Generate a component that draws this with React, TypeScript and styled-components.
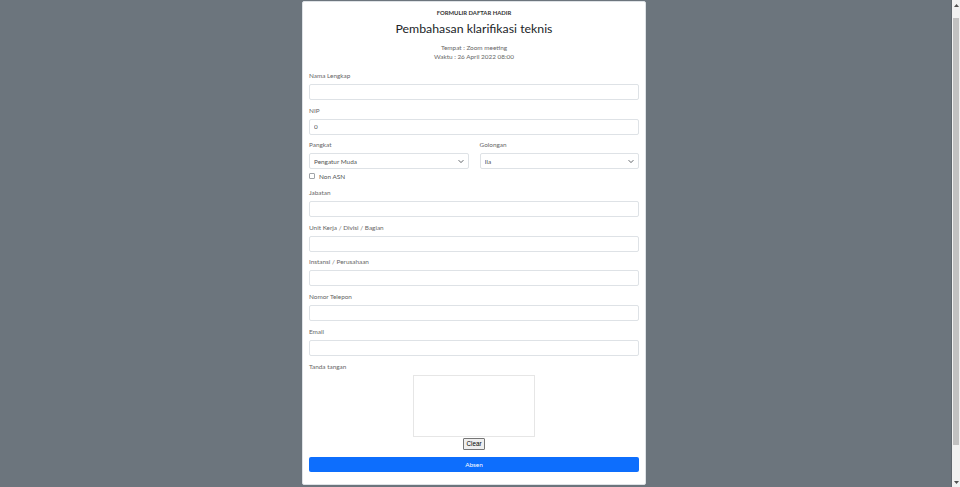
import React from "react";
import styled, { createGlobalStyle } from "styled-components";

const GlobalStyle = createGlobalStyle`
  html, body { margin: 0; padding: 0; overflow: hidden; }
  body {
    background: #6c757d;
    font-family: "Lato", "Noto Sans", sans-serif;
  }
`;

const Shell = styled.div`
  display: flex;
  height: 100vh;
  overflow: hidden;
`;

const Main = styled.main`
  flex: 1;
  display: flex;
  justify-content: center;
  align-items: flex-start;
  padding-top: 1px;
  border-right: 1px solid #5f676e;
`;

const ScrollBar = styled.div`
  width: 8px;
  display: flex;
  flex-direction: column;
  background: #f1f1f1;
`;

const ScrollButton = styled.div`
  height: 10px;
  display: flex;
  align-items: center;
  justify-content: center;
`;

const ScrollTrack = styled.div`
  flex: 1;
  padding: 8px 1px 0;
`;

const ScrollThumb = styled.div`
  height: 427px;
  background: #c1c1c1;
`;

const Card = styled.div`
  width: 344px;
  margin-right: 3px;
  box-sizing: border-box;
  background: #fff;
  border: 1px solid #dee2e6;
  border-radius: 2px;
  padding: 6px 6px 12px;
`;

const Kicker = styled.div`
  text-align: center;
  font-size: 5.9px;
  font-weight: 700;
  line-height: 9px;
  color: #333;
`;

const Title = styled.h1`
  margin: 4px 0 0;
  text-align: center;
  font-size: 12.3px;
  font-weight: 400;
  line-height: 16px;
  color: #212529;
`;

const Meta = styled.div`
  margin-top: 6px;
  text-align: center;
  font-size: 6.4px;
  line-height: 9px;
  color: #666;
`;

const Form = styled.form`
  margin-top: 10px;
  display: flex;
  flex-direction: column;
`;

const Group = styled.div<{ $gap?: number }>`
  display: flex;
  flex-direction: column;
  margin-bottom: ${(p) => p.$gap ?? 5.7}px;
  min-width: 0;
`;

const Label = styled.label`
  font-size: 6.4px;
  line-height: 9px;
  color: #666;
  margin-bottom: 4px;
`;

const Input = styled.input`
  display: block;
  box-sizing: border-box;
  height: 16px;
  width: 100%;
  border: 1px solid #dee2e6;
  border-radius: 2px;
  padding: 0 4px;
  font-family: inherit;
  font-size: 6.4px;
  color: #555;
  background: #fff;
  outline: none;
`;

const Row = styled.div`
  display: grid;
  grid-template-columns: 1fr 1fr;
  column-gap: 11px;
`;

const SelectWrap = styled.div`
  position: relative;
`;

const Select = styled.select`
  display: block;
  box-sizing: border-box;
  appearance: none;
  height: 16px;
  width: 100%;
  border: 1px solid #dee2e6;
  border-radius: 2px;
  padding: 0 4px;
  font-family: inherit;
  font-size: 6.4px;
  color: #555;
  background: #fff;
  outline: none;
`;

const Chevron = styled.svg`
  position: absolute;
  right: 5px;
  top: 5.5px;
  width: 6px;
  height: 5px;
  pointer-events: none;
`;

const CheckRow = styled.div`
  display: flex;
  align-items: center;
  gap: 4px;
  margin-top: 2px;
  margin-bottom: 6.7px;
  height: 10px;
`;

const Check = styled.input`
  appearance: none;
  margin: 0;
  width: 6px;
  height: 6px;
  border: 1px solid #a0a4a8;
  border-radius: 1px;
  background: #fff;
`;

const CheckLabel = styled.label`
  font-size: 6.4px;
  color: #555;
`;

const SignArea = styled.div`
  display: flex;
  flex-direction: column;
  align-items: center;
`;

const Canvas = styled.canvas`
  display: block;
  box-sizing: border-box;
  width: 122px;
  height: 62px;
  border: 1px solid #e6e6e6;
  background: #fff;
`;

const ClearButton = styled.button`
  box-sizing: border-box;
  margin-top: 1px;
  height: 12px;
  width: 22px;
  padding: 0;
  font-family: "Liberation Sans", Arial, sans-serif;
  font-size: 6.3px;
  color: #000;
  background: #efefef;
  border: 1px solid #767676;
  border-radius: 1px;
`;

const Submit = styled.button`
  margin-top: 7px;
  height: 15px;
  width: 100%;
  border: none;
  border-radius: 2px;
  background: #0d6efd;
  color: #fff;
  font-family: inherit;
  font-size: 6.4px;
  padding: 0;
`;

const fields = ["Jabatan", "Unit Kerja / Divisi / Bagian", "Instansi / Perusahaan", "Nomor Telepon", "Email"];

function ChevronIcon() {
  return (
    <Chevron viewBox="0 0 16 14">
      <path d="M2 4l6 6 6-6" fill="none" stroke="#343a40" strokeWidth="2.2" strokeLinecap="round" strokeLinejoin="round" />
    </Chevron>
  );
}

function Arrow({ down }: { down?: boolean }) {
  return (
    <svg width="5" height="3" viewBox="0 0 5 3">
      <path d={down ? "M0 0h5L2.5 3z" : "M0 3h5L2.5 0z"} fill="#505050" />
    </svg>
  );
}

export default function App() {
  return (
    <>
      <GlobalStyle />
      <Shell>
        <Main>
          <Card>
            <Kicker>FORMULIR DAFTAR HADIR</Kicker>
            <Title>Pembahasan klarifikasi teknis</Title>
            <Meta>
              Tempat : Zoom meeting
              <br />
              Waktu : 26 April 2022 08:00
            </Meta>
            <Form onSubmit={(e) => e.preventDefault()}>
              <Group>
                <Label>Nama Lengkap</Label>
                <Input type="text" />
              </Group>
              <Group>
                <Label>NIP</Label>
                <Input type="text" defaultValue="0" />
              </Group>
              <Row>
                <Group $gap={0}>
                  <Label>Pangkat</Label>
                  <SelectWrap>
                    <Select defaultValue="Pengatur Muda">
                      <option>Pengatur Muda</option>
                    </Select>
                    <ChevronIcon />
                  </SelectWrap>
                </Group>
                <Group $gap={0}>
                  <Label>Golongan</Label>
                  <SelectWrap>
                    <Select defaultValue="IIa">
                      <option>IIa</option>
                    </Select>
                    <ChevronIcon />
                  </SelectWrap>
                </Group>
              </Row>
              <CheckRow>
                <Check type="checkbox" id="nonasn" />
                <CheckLabel htmlFor="nonasn">Non ASN</CheckLabel>
              </CheckRow>
              {fields.map((f) => (
                <Group key={f}>
                  <Label>{f}</Label>
                  <Input type="text" />
                </Group>
              ))}
              <Group $gap={0}>
                <Label>Tanda tangan</Label>
                <SignArea>
                  <Canvas width={122} height={62} />
                  <ClearButton type="button">Clear</ClearButton>
                </SignArea>
              </Group>
              <Submit type="submit">Absen</Submit>
            </Form>
          </Card>
        </Main>
        <ScrollBar>
          <ScrollButton>
            <Arrow />
          </ScrollButton>
          <ScrollTrack>
            <ScrollThumb />
          </ScrollTrack>
          <ScrollButton>
            <Arrow down />
          </ScrollButton>
        </ScrollBar>
      </Shell>
    </>
  );
}
